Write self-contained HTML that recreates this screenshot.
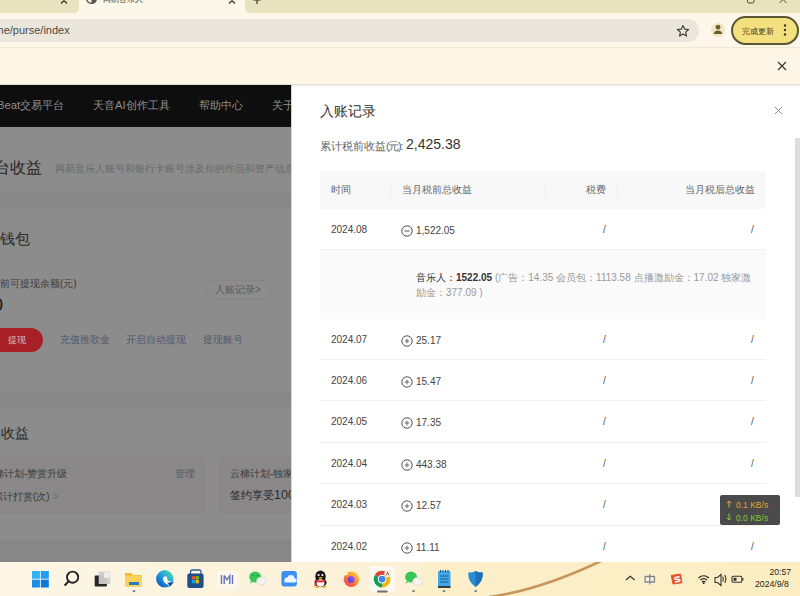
<!DOCTYPE html>
<html><head><meta charset="utf-8">
<style>
*{margin:0;padding:0;box-sizing:border-box}
html,body{width:800px;height:596px;overflow:hidden;background:#fdf7ea;font-family:"Liberation Sans",sans-serif;position:relative}
.a{position:absolute;white-space:nowrap}
/* chrome */
#tabstrip{left:0;top:0;width:800px;height:13px;background:#fdf7ea}
#tab1{left:0;top:0;width:79px;height:14px;background:#ebe3c4}
#acttab{left:80px;top:-10px;width:164px;height:24px;background:#fdf7ea;border-radius:0 0 0 0}
#toolbar{left:0;top:13px;width:800px;height:34px;background:#fdf7ea}
#url{left:-30px;top:19px;width:729px;height:23px;background:#ebe6dc;border-radius:12px}
#infobar{left:0;top:47px;width:800px;height:38px;background:#fef7e8;border-top:1px solid #f1e8d3}
/* page */
#page{left:0;top:85px;width:800px;height:477px;background:#8c8c8c;overflow:hidden}
#hdr{left:0;top:0;width:292px;height:41.5px;background:#0e0e0e}
.nav{color:#8f8f8f;font-size:11.3px;top:13px}
.band{left:0;width:292px;height:11px;background:#878787}
#modal{left:292px;top:0;width:508px;height:477px;background:#fff;box-shadow:-1px 0 0 #d2d2d2}
.t{color:#333}
/* taskbar */
#taskbar{left:0;top:562px;width:800px;height:34px;background:linear-gradient(90deg,#fdf6e6 0%,#fcf1d6 50%,#fbebb8 100%)}
</style></head>
<body>
<div class="a" id="tabstrip"></div>
<div class="a" style="left:0;top:0;width:79px;height:13px;background:#e9e2bf;border-radius:0 0 5px 0"></div>
<svg class="a" style="left:58px;top:0" width="12" height="8" viewBox="0 0 12 8"><path d="M3 -3 L9 3.5 M9 -3 L3 3.5" stroke="#3b3729" stroke-width="1.2"/></svg>
<div class="a" id="acttab"></div>
<svg class="a" style="left:84.5px;top:-8px" width="13" height="13" viewBox="0 0 14 14"><circle cx="7" cy="7" r="5.3" fill="none" stroke="#5a5650" stroke-width="1.5"/><path d="M7 1.7 A5.3 5.3 0 0 1 7 12.3 Z" fill="#5a5650"/></svg>
<div class="a" style="left:102.5px;top:-5.5px;font-size:8.4px;color:#4a463c;line-height:1.15"><span class="c">网易音乐人</span></div>
<svg class="a" style="left:226px;top:0" width="12" height="8" viewBox="0 0 12 8"><path d="M3 -3 L9 3.5 M9 -3 L3 3.5" stroke="#3b3729" stroke-width="1.2"/></svg>
<div class="a" style="left:245px;top:0;width:555px;height:13px;background:#e9e2bf;border-radius:0 0 0 5px"></div>
<svg class="a" style="left:251px;top:0" width="12" height="8" viewBox="0 0 12 8"><path d="M6 -3 V4 M2.3 0 H9.7" stroke="#3b3729" stroke-width="1.2"/></svg>
<svg class="a" style="left:744px;top:0" width="12" height="7" viewBox="0 0 12 7"><rect x="3.5" y="-4" width="6.5" height="7" rx="1.5" fill="none" stroke="#4a4535" stroke-width="1"/></svg>
<svg class="a" style="left:777px;top:0" width="12" height="7" viewBox="0 0 12 7"><path d="M2.5 -4 L9.5 3 M9.5 -4 L2.5 3" stroke="#4a4535" stroke-width=".9"/></svg>
<div class="a" id="toolbar"></div>
<div class="a" id="url"></div>
<div class="a" style="left:-5.5px;top:24px;font-size:11px;color:#4f4b43;line-height:1.15">me/purse/index</div>
<svg class="a" style="left:676px;top:24px" width="14" height="14" viewBox="0 0 24 24"><path d="M12 2.5l2.9 6.2 6.8.7-5.1 4.6 1.4 6.7L12 17.3l-5.9 3.4 1.4-6.7-5.1-4.6 6.8-.7z" fill="none" stroke="#3b3729" stroke-width="1.9" stroke-linejoin="round"/></svg>
<div class="a" style="left:711px;top:23px;width:14px;height:14px;border-radius:50%;background:#efe6c8"></div>
<svg class="a" style="left:713px;top:24px" width="10" height="11" viewBox="0 0 10 11"><circle cx="5" cy="3.2" r="2.4" fill="#6b5f2a"/><path d="M0.8 10 Q1 6.5 5 6.5 Q9 6.5 9.2 10 Z" fill="#6b5f2a"/></svg>
<div class="a" style="left:731px;top:16px;width:67.5px;height:29px;border-radius:15px;background:#f3e07f;border:2px solid #5a5532"></div>
<div class="a" style="left:742px;top:27.00px;font-size:8.4px;color:#3a3622;line-height:1.15"><span class="c">完成更新</span></div>
<svg class="a" style="left:782px;top:23px" width="6" height="14" viewBox="0 0 6 14"><circle cx="3" cy="2.5" r="1.2" fill="#3a3622"/><circle cx="3" cy="7" r="1.2" fill="#3a3622"/><circle cx="3" cy="11.5" r="1.2" fill="#3a3622"/></svg>
<div class="a" id="infobar"></div>
<div class="a" style="left:0;top:84px;width:800px;height:1px;background:#e2ddd2"></div>
<svg class="a" style="left:776px;top:60px" width="12" height="12" viewBox="0 0 12 12"><path d="M2 2 L10 10 M10 2 L2 10" stroke="#3b3729" stroke-width="1.2"/></svg>

<div class="a" id="page">
  <div class="a" id="hdr"></div>
  <div class="a nav" style="left:-3px;top:14.00px;line-height:1.15">Beat<span class="c">交易平台</span></div>
  <div class="a nav" style="left:93px;top:14.00px;line-height:1.15"><span class="c">天音</span>AI<span class="c">创作工具</span></div>
  <div class="a nav" style="left:199px;top:14.00px;line-height:1.15"><span class="c">帮助中心</span></div>
  <div class="a nav" style="left:272px;top:14.00px;line-height:1.15"><span class="c">关于</span></div>
  <div class="a band" style="top:108px;height:15px"></div>
  <div class="a band" style="top:307px;height:15px"></div>
  <div class="a band" style="top:455px;height:22px"></div>
  <div class="a" style="left:-6px;top:74.00px;font-size:16px;color:#2a2a2a;line-height:1.15"><span class="c">台收益</span></div>
  <div class="a" style="left:55px;top:78.00px;font-size:10.1px;color:#6a6a6a;line-height:1.15"><span class="c">网易音乐人账号和银行卡账号涉及你的作品和资产信息</span></div>
  <div class="a" style="left:-15px;top:145px;font-size:15px;color:#2a2a2a;line-height:1.15"><span class="c">的钱包</span></div>
  <div class="a" style="left:-10px;top:193.00px;font-size:10px;color:#3a3a3a;line-height:1.15"><span class="c">当前可提现余额</span>(<span class="c">元</span>)</div>
  <div class="a" style="left:-7.6px;top:208.5px;font-size:19px;color:#1a1a1a;line-height:1.15">0</div>
  <div class="a" style="left:205px;top:195px;width:67px;height:20px;border:1px solid #868686;border-radius:10px;font-size:10px;line-height:18px;color:#5a5a5a;padding-left:9px"><span class="c">入账记录</span>&gt;</div>
  <div class="a" style="left:284px;top:195px;width:40px;height:20px;border:1px solid #868686;border-radius:10px"></div>
  <div class="a" style="left:-20px;top:243px;width:63px;height:24px;background:#a82027;border-radius:12px;font-size:9px;line-height:25px;color:#d2c4c4;padding-left:28px"><span class="c">提现</span></div>
  <div class="a" style="left:60px;top:249.00px;font-size:10.3px;color:#4e586a;line-height:1.15"><span class="c">充值推歌金</span></div>
  <div class="a" style="left:126px;top:249.00px;font-size:10.3px;color:#4e586a;line-height:1.15"><span class="c">开启自动提现</span></div>
  <div class="a" style="left:203px;top:249.00px;font-size:10.3px;color:#4e586a;line-height:1.15"><span class="c">提现账号</span></div>
  <div class="a" style="left:-13px;top:340px;font-size:14px;color:#2a2a2a;line-height:1.15"><span class="c">的收益</span></div>
  <div class="a" style="left:-20px;top:372px;width:226px;height:56px;background:#8a8888;border:1px solid #878585;border-radius:5px"></div>
  <div class="a" style="left:-16px;top:383.00px;font-size:10px;color:#3a3a3a;line-height:1.15"><span class="c">云梯计划</span>-<span class="c">赞赏升级</span></div>
  <div class="a" style="left:175px;top:383.00px;font-size:10px;color:#4e586a;line-height:1.15"><span class="c">管理</span></div>
  <div class="a" style="left:-7px;top:406.00px;font-size:10px;color:#3a3a3a;line-height:1.15"><span class="c">累计打赏</span>(<span class="c">次</span>) <span style="color:#6a6a6a">&gt;</span></div>
  <div class="a" style="left:218px;top:372px;width:226px;height:56px;background:#8a8888;border:1px solid #878585;border-radius:5px"></div>
  <div class="a" style="left:230px;top:383.00px;font-size:10px;color:#3a3a3a;line-height:1.15"><span class="c">云梯计划</span>-<span class="c">独家签约</span></div>
  <div class="a" style="left:230px;top:403px;font-size:11.2px;color:#2a2a2a;line-height:1.15"><span class="c">签约享受</span><span style="font-size:12.5px">100%</span></div>
  <div class="a" id="modal">
    <div class="a t" style="left:28px;top:18px;font-size:14px;color:#333;line-height:1.15"><span class="c">入账记录</span></div>
    <svg class="a" style="left:482px;top:21px" width="9" height="9" viewBox="0 0 9 9"><path d="M1 1 L8 8 M8 1 L1 8" stroke="#888" stroke-width="1"/></svg>
    <div class="a" style="left:28px;top:55.00px;font-size:11px;color:#666;line-height:1.15"><span class="c">累计税前收益</span><span style="letter-spacing:-1.4px">(<span class="c">元</span>):</span></div>
    <div class="a" style="left:114px;top:51px;font-size:14px;color:#333;line-height:1.15">2,425.38</div>
    <div class="a" style="left:28px;top:86px;width:446px;height:38px;background:#f8f8f8"></div>
    <div class="a" style="left:98px;top:96px;width:1px;height:17px;background:#ebebeb"></div>
    <div class="a" style="left:325px;top:96px;width:1px;height:17px;background:#ebebeb"></div>
    <div class="a" style="left:253px;top:96px;width:1px;height:17px;background:#ebebeb"></div>
    <div class="a" style="left:39px;top:99.00px;font-size:10px;color:#666;line-height:1.15"><span class="c">时间</span></div>
    <div class="a" style="left:110px;top:99.00px;font-size:10px;color:#666;line-height:1.15"><span class="c">当月税前总收益</span></div>
    <div class="a" style="left:294px;top:99.00px;font-size:10px;color:#666;line-height:1.15"><span class="c">税费</span></div>
    <div class="a" style="left:393px;top:99.00px;font-size:10px;color:#666;line-height:1.15"><span class="c">当月税后总收益</span></div>
    <div class="a" style="left:39px;top:139.0px;font-size:10px;color:#444;line-height:1.15">2024.08</div>
    <svg class="a" style="left:109px;top:140.0px" width="12" height="12" viewBox="0 0 12 12"><circle cx="6" cy="6" r="5.2" fill="none" stroke="#555" stroke-width="1"/><path d="M3.5 6 H8.5" stroke="#555" stroke-width="1"/></svg>
    <div class="a" style="left:124px;top:140.0px;font-size:10px;color:#444;line-height:1.15">1,522.05</div>
    <div class="a" style="left:311px;top:139.0px;font-size:10px;color:#555;line-height:1.15">/</div>
    <div class="a" style="left:459px;top:139.0px;font-size:10px;color:#555;line-height:1.15">/</div>
    <div class="a" style="left:28px;top:164.0px;width:446px;height:1px;background:#f1f1f1"></div>
    <div class="a" style="left:28px;top:165.0px;width:446px;height:68.5px;background:#fafafa"></div>
    <div class="a" style="left:124px;top:185.0px;font-size:10px;line-height:15px;color:#999"><span style="color:#333"><span class="c">音乐人：</span></span><b style="color:#333">1522.05</b> (<span class="c">广告：</span>14.35 <span class="c">会员包：</span>1113.58 <span class="c">点播激励金：</span>17.02 <span class="c">独家激</span><br><span class="c">励金：</span>377.09 )</div>
    <div class="a" style="left:39px;top:248.5px;font-size:10px;color:#444;line-height:1.15">2024.07</div>
    <svg class="a" style="left:109px;top:249.5px" width="12" height="12" viewBox="0 0 12 12"><circle cx="6" cy="6" r="5.2" fill="none" stroke="#555" stroke-width="1"/><path d="M3.7 6 H8.3 M6 3.7 V8.3" stroke="#666" stroke-width="1"/></svg>
    <div class="a" style="left:124px;top:249.5px;font-size:10px;color:#444;line-height:1.15">25.17</div>
    <div class="a" style="left:311px;top:248.5px;font-size:10px;color:#555;line-height:1.15">/</div>
    <div class="a" style="left:459px;top:248.5px;font-size:10px;color:#555;line-height:1.15">/</div>
    <div class="a" style="left:28px;top:273.9px;width:446px;height:1px;background:#f1f1f1"></div>
    <div class="a" style="left:39px;top:289.9px;font-size:10px;color:#444;line-height:1.15">2024.06</div>
    <svg class="a" style="left:109px;top:290.9px" width="12" height="12" viewBox="0 0 12 12"><circle cx="6" cy="6" r="5.2" fill="none" stroke="#555" stroke-width="1"/><path d="M3.7 6 H8.3 M6 3.7 V8.3" stroke="#666" stroke-width="1"/></svg>
    <div class="a" style="left:124px;top:290.9px;font-size:10px;color:#444;line-height:1.15">15.47</div>
    <div class="a" style="left:311px;top:289.9px;font-size:10px;color:#555;line-height:1.15">/</div>
    <div class="a" style="left:459px;top:289.9px;font-size:10px;color:#555;line-height:1.15">/</div>
    <div class="a" style="left:28px;top:315.3px;width:446px;height:1px;background:#f1f1f1"></div>
    <div class="a" style="left:39px;top:331.3px;font-size:10px;color:#444;line-height:1.15">2024.05</div>
    <svg class="a" style="left:109px;top:332.3px" width="12" height="12" viewBox="0 0 12 12"><circle cx="6" cy="6" r="5.2" fill="none" stroke="#555" stroke-width="1"/><path d="M3.7 6 H8.3 M6 3.7 V8.3" stroke="#666" stroke-width="1"/></svg>
    <div class="a" style="left:124px;top:332.3px;font-size:10px;color:#444;line-height:1.15">17.35</div>
    <div class="a" style="left:311px;top:331.3px;font-size:10px;color:#555;line-height:1.15">/</div>
    <div class="a" style="left:459px;top:331.3px;font-size:10px;color:#555;line-height:1.15">/</div>
    <div class="a" style="left:28px;top:356.7px;width:446px;height:1px;background:#f1f1f1"></div>
    <div class="a" style="left:39px;top:372.7px;font-size:10px;color:#444;line-height:1.15">2024.04</div>
    <svg class="a" style="left:109px;top:373.7px" width="12" height="12" viewBox="0 0 12 12"><circle cx="6" cy="6" r="5.2" fill="none" stroke="#555" stroke-width="1"/><path d="M3.7 6 H8.3 M6 3.7 V8.3" stroke="#666" stroke-width="1"/></svg>
    <div class="a" style="left:124px;top:373.7px;font-size:10px;color:#444;line-height:1.15">443.38</div>
    <div class="a" style="left:311px;top:372.7px;font-size:10px;color:#555;line-height:1.15">/</div>
    <div class="a" style="left:459px;top:372.7px;font-size:10px;color:#555;line-height:1.15">/</div>
    <div class="a" style="left:28px;top:398.1px;width:446px;height:1px;background:#f1f1f1"></div>
    <div class="a" style="left:39px;top:414.1px;font-size:10px;color:#444;line-height:1.15">2024.03</div>
    <svg class="a" style="left:109px;top:415.1px" width="12" height="12" viewBox="0 0 12 12"><circle cx="6" cy="6" r="5.2" fill="none" stroke="#555" stroke-width="1"/><path d="M3.7 6 H8.3 M6 3.7 V8.3" stroke="#666" stroke-width="1"/></svg>
    <div class="a" style="left:124px;top:415.1px;font-size:10px;color:#444;line-height:1.15">12.57</div>
    <div class="a" style="left:311px;top:414.1px;font-size:10px;color:#555;line-height:1.15">/</div>
    <div class="a" style="left:459px;top:414.1px;font-size:10px;color:#555;line-height:1.15">/</div>
    <div class="a" style="left:28px;top:439.5px;width:446px;height:1px;background:#f1f1f1"></div>
    <div class="a" style="left:39px;top:455.5px;font-size:10px;color:#444;line-height:1.15">2024.02</div>
    <svg class="a" style="left:109px;top:456.5px" width="12" height="12" viewBox="0 0 12 12"><circle cx="6" cy="6" r="5.2" fill="none" stroke="#555" stroke-width="1"/><path d="M3.7 6 H8.3 M6 3.7 V8.3" stroke="#666" stroke-width="1"/></svg>
    <div class="a" style="left:124px;top:456.5px;font-size:10px;color:#444;line-height:1.15">11.11</div>
    <div class="a" style="left:311px;top:455.5px;font-size:10px;color:#555;line-height:1.15">/</div>
    <div class="a" style="left:459px;top:455.5px;font-size:10px;color:#555;line-height:1.15">/</div>
    <div class="a" style="left:28px;top:480.9px;width:446px;height:1px;background:#f1f1f1"></div>
  </div>
</div>

<div class="a" style="left:0;top:85px;width:800px;height:3px;background:linear-gradient(rgba(0,0,0,.07),rgba(0,0,0,0))"></div>
<div class="a" id="taskbar"></div>
<svg class="a" style="left:0;top:562px" width="800" height="34" viewBox="0 0 800 34">
 <defs>
  <linearGradient id="wl" x1="0" y1="0" x2="1" y2="1"><stop offset="0" stop-color="#27b0f5"/><stop offset="1" stop-color="#0b6fd0"/></linearGradient>
  <linearGradient id="edg" x1="0" y1="0" x2="1" y2="1"><stop offset="0" stop-color="#3ad07a"/><stop offset=".5" stop-color="#1a8fd8"/><stop offset="1" stop-color="#0c4fa8"/></linearGradient>
 </defs>
 <path d="M428 0 L800 0 L800 34 L414 34 Z" fill="#fcefc6" opacity=".75"/>
 <path d="M489 35 Q540 28 601 -1" fill="none" stroke="#c8955a" stroke-width="2.6"/>
 <!-- windows -->
 <rect x="32" y="9" width="16.8" height="16.5" fill="#dff0fb"/>
 <rect x="32" y="9" width="7.9" height="7.7" fill="#2eb2f3"/><rect x="40.9" y="9" width="7.9" height="7.7" fill="#1f9ff0"/>
 <rect x="32" y="17.7" width="7.9" height="7.8" fill="#1a8de6"/><rect x="40.9" y="17.7" width="7.9" height="7.8" fill="#0f78d6"/>
 <!-- search -->
 <circle cx="72.6" cy="15.2" r="5.6" fill="none" stroke="#262626" stroke-width="1.9"/>
 <path d="M68.7 19.1 L65.2 23" stroke="#262626" stroke-width="2.1" stroke-linecap="round"/>
 <!-- task view -->
 <rect x="94.7" y="13.5" width="12.2" height="11" fill="#262626" rx=".8"/>
 <rect x="98.7" y="9.6" width="11.8" height="12.4" fill="#cfcdca" rx="1" opacity=".95"/>
 <rect x="104" y="10" width="6.2" height="6" fill="#ecebe8" rx="1"/>
 <!-- folder -->
 <path d="M125 11 h6 l2 2 h9 v11.5 h-17 z" fill="#f1b92c"/>
 <rect x="125" y="13.5" width="17" height="11" fill="#fbd25a"/>
 <rect x="129" y="20" width="10" height="3" fill="#2a78c6"/>
 <rect x="132.5" y="28.3" width="3" height="1.6" rx=".8" fill="#777"/>
 <!-- edge -->
 <defs><linearGradient id="edg2" x1="1" y1="0" x2="0" y2="1"><stop offset="0" stop-color="#6ee06a"/><stop offset=".35" stop-color="#2cb8d8"/><stop offset=".7" stop-color="#1479d6"/><stop offset="1" stop-color="#0b4d9e"/></linearGradient></defs>
 <circle cx="164.8" cy="16.8" r="8.7" fill="url(#edg2)"/>
 <path d="M163 17.5 Q162.5 14.5 165.5 14.3 Q167.5 14.3 167.3 16.5 Q167 18.5 169.5 19.2 Q172 19.8 173.8 19 Q172.5 23.5 168.5 25 Q169 23.5 167.5 22.5 Q164 21.5 163 17.5 Z" fill="#fdf7ea"/>
 <path d="M168.5 25 Q172.5 23.5 173.8 19 Q171 21 167 20.8 Q169.5 22 168.5 25 Z" fill="#0e57a8"/>
 <!-- store -->
 <path d="M190.5 12 v-2 q0-2 2-2 h6.5 q2 0 2 2 v2" fill="none" stroke="#2d5d96" stroke-width="1.3"/>
 <rect x="187.3" y="11.5" width="16.3" height="14.5" rx="2" fill="#1f4f8a"/>
 <rect x="191.8" y="14.2" width="3.3" height="3.3" fill="#f25022"/><rect x="195.6" y="14.2" width="3.3" height="3.3" fill="#7fba00"/>
 <rect x="191.8" y="18" width="3.3" height="3.3" fill="#00a4ef"/><rect x="195.6" y="18" width="3.3" height="3.3" fill="#ffb900"/>
 <!-- M icon -->
 <rect x="217" y="9" width="20" height="18" rx="3" fill="#fdf8ee"/>
 <path d="M221.5 13 v9 M232.5 13 v9 M224.2 13.5 l2.8 4.3 l2.8 -4.3 v8.5 M224.2 13.5 v8.5" fill="none" stroke="#6673b8" stroke-width="1.4"/>
 <!-- wechat -->
 <ellipse cx="255.2" cy="15" rx="6" ry="5.4" fill="#38c558"/>
 <path d="M251 19 l-1.2 2.5 l3 -1.6 z" fill="#38c558"/>
 <ellipse cx="261.5" cy="19" rx="4.8" ry="4" fill="#f4f3f1" stroke="#d6d4d0" stroke-width=".7"/>
 <circle cx="253" cy="13.6" r=".7" fill="#2a7a3c"/><circle cx="257.4" cy="13.6" r=".7" fill="#2a7a3c"/>
 <!-- cloud -->
 <rect x="281.4" y="9" width="15.5" height="15.4" rx="3" fill="#3b8ff2"/>
 <path d="M284.5 20.5 h10 q2.2 0 2.2 -2 q0 -2 -2.2 -2.2 q-.4 -3.3 -3.7 -3.3 q-2.6 0 -3.4 2.4 q-3 -.2 -3 2.5 q0 2.6 .1 2.6 z" fill="#eef6ff"/>
 <!-- QQ -->
 <ellipse cx="320.5" cy="14.5" rx="5.2" ry="6" fill="#111"/>
 <ellipse cx="320.5" cy="20.5" rx="6" ry="4.5" fill="#111"/>
 <ellipse cx="320.5" cy="21" rx="4" ry="3.8" fill="#f5f5f5"/>
 <path d="M315.5 17.5 q5 2 10 0 v2 q-5 2 -10 0 z" fill="#e52c2c"/>
 <path d="M316 19 l-2 5 l3 -1 z" fill="#e52c2c"/>
 <circle cx="318.6" cy="13" r="1.1" fill="#fff"/><circle cx="322.4" cy="13" r="1.1" fill="#fff"/>
 <ellipse cx="320.5" cy="15.8" rx="2" ry=".9" fill="#f4b400"/>
 <path d="M314.5 24.5 q2 1.5 4 .5 M322.5 25 q2 1 4 -.5" stroke="#f4b400" stroke-width="1.2" fill="none"/>
 <!-- firefox -->
 <defs><linearGradient id="ffg" x1="1" y1="0" x2=".2" y2="1"><stop offset="0" stop-color="#ffe03a"/><stop offset=".5" stop-color="#ff9030"/><stop offset="1" stop-color="#f2385a"/></linearGradient>
 <linearGradient id="ffp" x1="1" y1="0" x2="0" y2="1"><stop offset="0" stop-color="#a05cff"/><stop offset="1" stop-color="#4a3ad0"/></linearGradient></defs>
 <circle cx="351.4" cy="17.3" r="7.7" fill="url(#ffg)"/>
 <path d="M344 11 Q346.5 10 348.5 12.5 Q347 13 345.5 13.5 Z" fill="#fdf6e6"/>
 <circle cx="351.2" cy="17.6" r="3.5" fill="url(#ffp)"/>
 <!-- chrome active -->
 <rect x="370" y="4" width="25" height="26" rx="3" fill="#fdf9f0"/>
 <path d="M382.1 17.1 L374.91 12.95 A8.3 8.3 0 0 1 389.29 12.95 Z" fill="#db4437"/>
 <path d="M382.1 17.1 L389.29 12.95 A8.3 8.3 0 0 1 382.1 25.4 Z" fill="#f4b400"/>
 <path d="M382.1 17.1 L382.1 25.4 A8.3 8.3 0 0 1 374.91 12.95 Z" fill="#0f9d58"/>
 <circle cx="382.1" cy="17.1" r="4.4" fill="#fff"/>
 <circle cx="382.1" cy="17.1" r="3.4" fill="#4285f4"/>
 <circle cx="387.6" cy="11.8" r="3.4" fill="#f3ead2"/>
 <path d="M386.3 13.3 l1.3 -3 l1.3 3" stroke="#6b5f3a" stroke-width=".9" fill="none"/>
 <rect x="377" y="28.5" width="10.7" height="2" rx="1" fill="#6f6f6f"/>
 <!-- wechat 2 -->
 <ellipse cx="411" cy="15" rx="6" ry="5.4" fill="#38c558"/>
 <path d="M406.8 19 l-1.2 2.5 l3 -1.6 z" fill="#38c558"/>
 <ellipse cx="417.5" cy="19.5" rx="4.8" ry="4" fill="#f4f3f1" stroke="#d6d4d0" stroke-width=".7"/>
 <rect x="412" y="28.3" width="3" height="1.6" rx=".8" fill="#777"/>
 <!-- notepad -->
 <rect x="438" y="9" width="12.5" height="16" rx="1" fill="#42a9e8"/>
 <rect x="438" y="24" width="12.5" height="2" fill="#3a3a3a"/>
 <path d="M440.5 7.8 v2.5 M443 7.8 v2.5 M445.5 7.8 v2.5 M448 7.8 v2.5" stroke="#1d4f7a" stroke-width="1"/>
 <path d="M440 14 h8.5 M440 17 h8.5 M440 20 h8.5" stroke="#1d5f9a" stroke-width="1"/>
 <rect x="442.5" y="28.3" width="3" height="1.6" rx=".8" fill="#777"/>
 <!-- shield -->
 <path d="M475.5 9 q4 2 7.3 1.5 q.5 9 -7.3 14.5 q-7.8 -5.5 -7.3 -14.5 q3.3 .5 7.3 -1.5 z" fill="#2b8bd6"/>
 <path d="M475.5 9 q4 2 7.3 1.5 q.5 9 -7.3 14.5 z" fill="#1f6fb6"/>
 <rect x="474.2" y="28.3" width="3" height="1.6" rx=".8" fill="#777"/>
 <!-- tray -->
 <path d="M626 18 l4.3 -3.8 l4.3 3.8" fill="none" stroke="#333" stroke-width="1.2"/>
 <path d="M645 14.5 h9.5 v5.5 h-9.5 z M649.8 12 v10.5" fill="none" stroke="#fbf6e8" stroke-width="3"/>
 <path d="M645 14.5 h9.5 v5.5 h-9.5 z M649.8 12 v10.5" fill="none" stroke="#858585" stroke-width="1.3"/>
 <path d="M671.3 13.4 L680.6 12 L681.9 20.8 L673 22 Z" fill="#e9522c" stroke="#e9522c" stroke-width="1" stroke-linejoin="round"/>
 <path d="M679.6 14.8 L676.2 15.2 Q674.6 15.5 674.8 16.6 Q675 17.6 676.6 17.5 L678.2 17.3 Q679.8 17.3 679.9 18.3 Q680 19.3 678.5 19.5 L675 19.9" fill="none" stroke="#fff" stroke-width="1.5"/>
 <path d="M698.5 16 q5.2 -4.5 10.4 0 M700.3 18 q3.4 -2.8 6.8 0 M702 20 q1.7 -1.3 3.4 0" fill="none" stroke="#222" stroke-width="1.2"/>
 <circle cx="703.7" cy="21.2" r=".9" fill="#222"/>
 <path d="M715 15.5 h2.5 l3.5 -3 v11 l-3.5 -3 h-2.5 z" fill="none" stroke="#333" stroke-width="1.1"/>
 <path d="M722.7 14.5 q1.3 2.5 0 5 M724.7 13 q2.3 4 0 8" fill="none" stroke="#333" stroke-width="1.1"/>
 <rect x="732" y="14.3" width="9.8" height="6" rx="1.3" fill="none" stroke="#333" stroke-width="1.1"/>
 <rect x="733.5" y="15.8" width="3" height="3" fill="#333"/>
 <rect x="742.2" y="16.2" width="1.3" height="2.2" fill="#333"/>
</svg>
<div class="a" style="left:769.5px;top:567px;font-size:8.6px;color:#1f1d15;line-height:10px">20:57</div>
<div class="a" style="left:755px;top:578.5px;font-size:8.7px;color:#1f1d15;line-height:10px">2024/9/8</div>
<div class="a" style="left:720px;top:495px;width:59.5px;height:30px;background:#4a4a4a;border-radius:2px"></div>
<svg class="a" style="left:726px;top:500px" width="6" height="8" viewBox="0 0 6 8"><path d="M3 7.5 V1 M0.8 3.2 L3 1 L5.2 3.2" fill="none" stroke="#e0a83a" stroke-width="1"/></svg>
<div class="a" style="left:736px;top:499.5px;font-size:8.5px;color:#e8a035;line-height:10px">0.1 KB/s</div>
<svg class="a" style="left:726px;top:513px" width="6" height="8" viewBox="0 0 6 8"><path d="M3 0.5 V7 M0.8 4.8 L3 7 L5.2 4.8" fill="none" stroke="#80c832" stroke-width="1"/></svg>
<div class="a" style="left:736px;top:512.5px;font-size:8.5px;color:#80c832;line-height:10px">0.0 KB/s</div>
<div class="a" style="left:794.5px;top:138px;width:5.5px;height:359px;background:#dcdce2"></div>
<script>
(function(){var d=document,s=d.createElement('span');s.style.cssText='position:absolute;left:0;top:0;font:100px "Liberation Sans",sans-serif;white-space:nowrap;visibility:hidden';s.textContent='\u5165\u8d26\u8bb0\u5f55';d.body.appendChild(s);var w=s.getBoundingClientRect().width;s.parentNode.removeChild(s);
if(w>0&&w<350){var c=d.querySelectorAll('span.c');for(var i=0;i<c.length;i++){var e=c[i],n=e.textContent.length,fs=parseFloat(getComputedStyle(e).fontSize),r=e.getBoundingClientRect().width;if(n>0&&r>0){e.style.letterSpacing=((n*fs-r)/n)+'px';}}}})();
</script>
</body></html>
